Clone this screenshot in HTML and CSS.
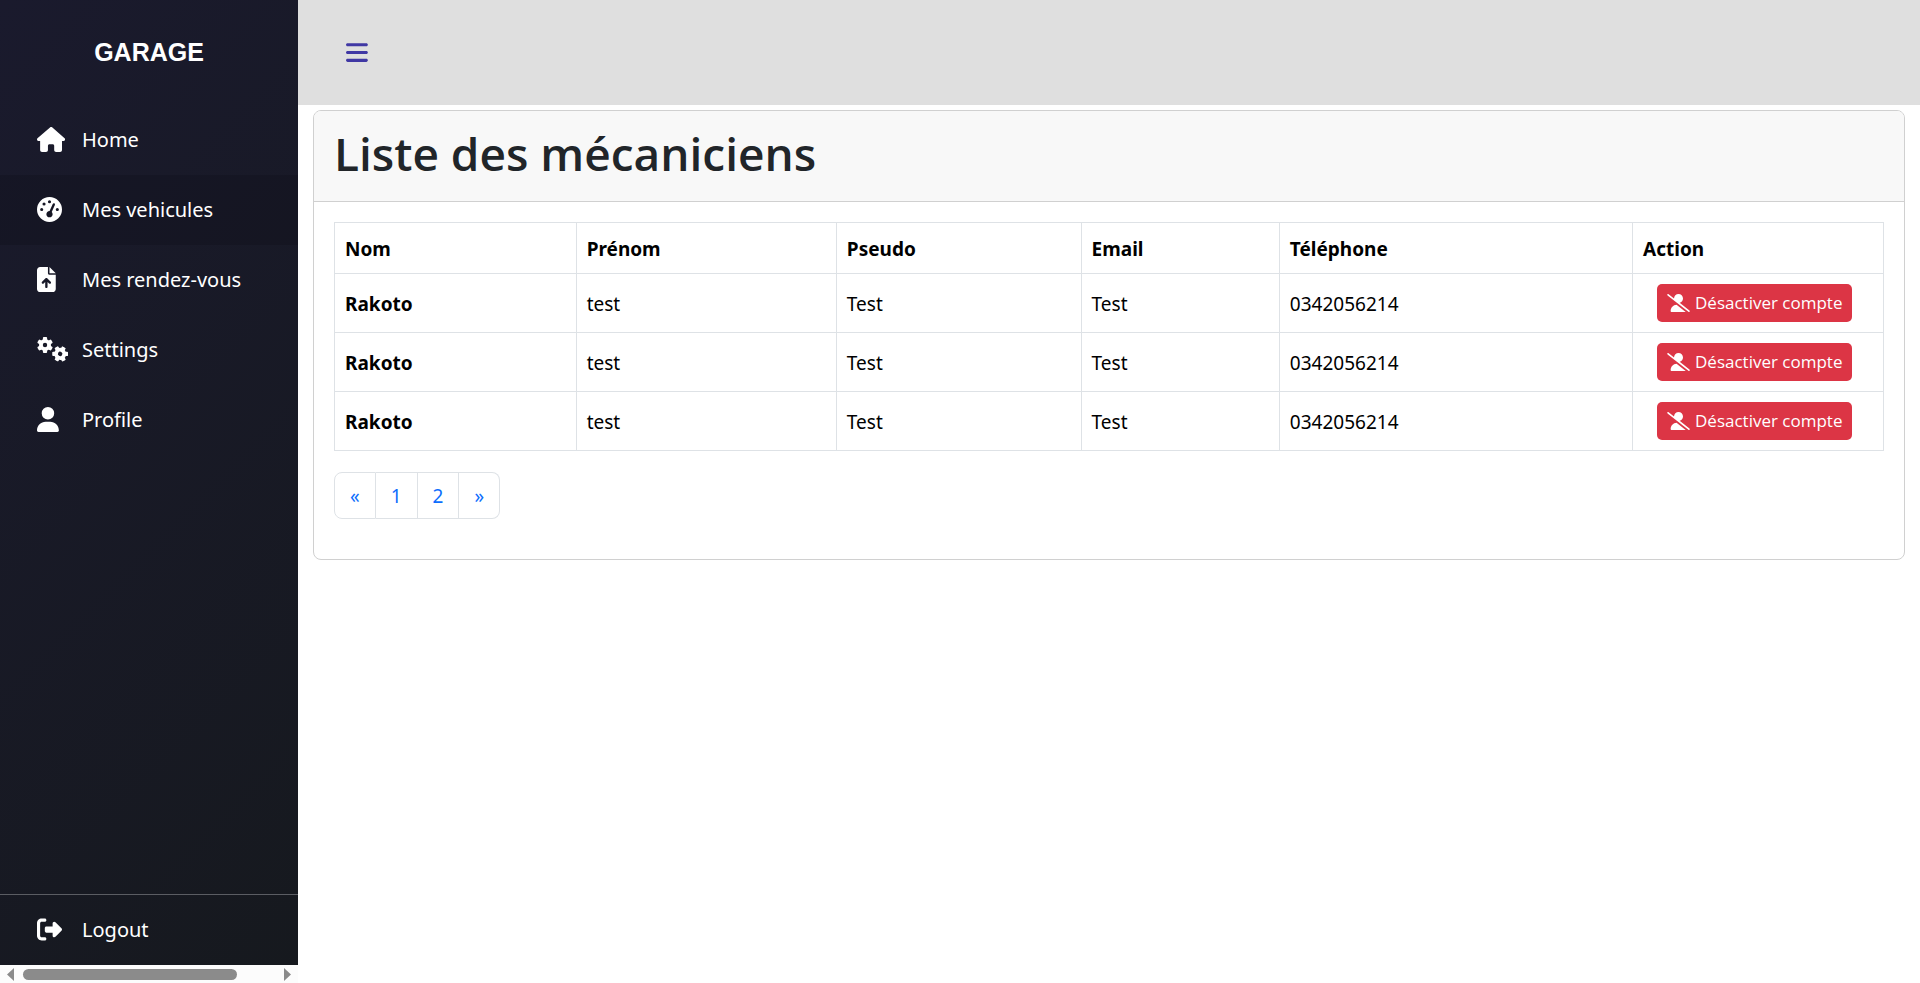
FILE: index.html
```html
<!DOCTYPE html>
<html lang="fr">
<head>
<meta charset="utf-8">
<title>Garage</title>
<link rel="stylesheet" href="styles.css">
</head>
<body>
<svg class="sprite" aria-hidden="true">
  <symbol id="slash" viewBox="0 0 640 512"><path d="M38.8 5.1C28.4-3.1 13.3-1.2 5.1 9.2S-1.2 34.7 9.2 42.9l592 464c10.4 8.2 25.5 6.3 33.7-4.1s6.3-25.5-4.1-33.7L353.3 251.6C407.9 237 448 187.2 448 128C448 57.3 390.7 0 320 0C250.2 0 193.5 55.8 192 125.2L38.8 5.1zM264.3 304.3C170.5 309.4 96 387.2 96 482.3c0 16.4 13.3 29.7 29.7 29.7H514.3c3.9 0 7.6-.7 11-2.1l-261-205.6z"/></symbol>
  <symbol id="gear" viewBox="-160 -160 320 320">
    <circle r="82" fill="none" stroke="currentColor" stroke-width="76"/>
    <g fill="currentColor">
      <rect id="tooth" x="-42" y="-158" width="84" height="64" rx="18"/>
      <use href="#tooth" transform="rotate(60)"/>
      <use href="#tooth" transform="rotate(120)"/>
      <use href="#tooth" transform="rotate(180)"/>
      <use href="#tooth" transform="rotate(240)"/>
      <use href="#tooth" transform="rotate(300)"/>
    </g>
  </symbol>
</svg>
<div class="layout">
  <aside class="sidebar">
    <div class="brand">GARAGE</div>
    <nav class="menu">
      <a class="item" href="#"><span class="icon"><svg viewBox="0 0 576 512"><path d="M575.8 255.5c0 18-15 32.1-32 32.1h-32l.7 160.2c0 2.7-.2 5.4-.5 8.1V472c0 22.1-17.9 40-40 40H456c-1.1 0-2.2 0-3.3-.1c-1.4 .1-2.8 .1-4.2 .1H416 392c-22.1 0-40-17.9-40-40V448 384c0-17.7-14.3-32-32-32H256c-17.7 0-32 14.3-32 32v64 24c0 22.1-17.9 40-40 40H160 128.1c-1.5 0-3-.1-4.5-.2c-1.2 .1-2.4 .2-3.6 .2H104c-22.1 0-40-17.9-40-40V360c0-.9 0-1.9 .1-2.8V287.6H32c-18 0-32-14-32-32.1c0-9 3-17 10-24L266.4 8c7-7 15-8 22-8s15 2 21 7L564.8 231.5c8 7 12 15 11 24z"/></svg></span><span class="label">Home</span></a>
      <a class="item active" href="#"><span class="icon"><svg viewBox="0 0 512 512"><path fill-rule="evenodd" d="M0 256a256 256 0 1 1 512 0A256 256 0 1 1 0 256zM288 96a32 32 0 1 0 -64 0 32 32 0 1 0 64 0zM256 416c35.3 0 64-28.7 64-64c0-17.4-6.9-33.1-18.1-44.6L366 161.7c5.3-12.1-.2-26.3-12.3-31.6s-26.3 .2-31.6 12.3L257.900 288c-.6 0-1.3 0-1.9 0c-35.3 0-64 28.7-64 64s28.7 64 64 64zM176 144a32 32 0 1 0 -64 0 32 32 0 1 0 64 0zM96 288a32 32 0 1 0 0-64 32 32 0 1 0 0 64zm352-32a32 32 0 1 0 -64 0 32 32 0 1 0 64 0z"/></svg></span><span class="label">Mes vehicules</span></a>
      <a class="item" href="#"><span class="icon"><svg viewBox="0 0 384 512"><path fill-rule="evenodd" d="M64 0C28.7 0 0 28.7 0 64V448c0 35.3 28.7 64 64 64H320c35.3 0 64-28.7 64-64V160H256c-17.7 0-32-14.3-32-32V0H64zM256 0V128H384L256 0zM216 408c0 13.3-10.7 24-24 24s-24-10.7-24-24V305.9l-31 31c-9.4 9.4-24.6 9.4-33.9 0s-9.4-24.6 0-33.9l72-72c9.4-9.4 24.6-9.4 33.9 0l72 72c9.4 9.4 9.4 24.6 0 33.9s-24.6 9.4-33.9 0l-31-31V408z"/></svg></span><span class="label">Mes rendez-vous</span></a>
      <a class="item" href="#"><span class="icon"><svg viewBox="0 0 640 512"><use href="#gear" x="0" y="0" width="328" height="328"/><use href="#gear" x="-164" y="-164" width="328" height="328" transform="translate(474 346) rotate(30)"/></svg></span><span class="label">Settings</span></a>
      <a class="item" href="#"><span class="icon"><svg viewBox="0 0 448 512"><path d="M224 256A128 128 0 1 0 224 0a128 128 0 1 0 0 256zm-45.7 48C79.8 304 0 383.8 0 482.3C0 498.7 13.3 512 29.7 512H418.3c16.4 0 29.7-13.3 29.7-29.7C448 383.8 368.2 304 269.7 304H178.3z"/></svg></span><span class="label">Profile</span></a>
    </nav>
    <div class="foot">
      <a class="item" href="#"><span class="icon"><svg viewBox="0 0 512 512"><path d="M377.9 105.9L500.7 228.7c7.2 7.2 11.3 17.1 11.3 27.3s-4.1 20.1-11.3 27.3L377.9 406.1c-6.4 6.4-15 9.9-24 9.9c-18.7 0-33.9-15.2-33.9-33.9l0-62.1-128 0c-17.7 0-32-14.3-32-32l0-64c0-17.7 14.3-32 32-32l128 0 0-62.1c0-18.7 15.2-33.9 33.9-33.9c9 0 17.6 3.6 24 9.9zM160 96L96 96c-17.7 0-32 14.3-32 32l0 256c0 17.7 14.3 32 32 32l64 0c17.7 0 32 14.3 32 32s-14.3 32-32 32l-64 0c-53 0-96-43-96-96L0 128C0 75 43 32 96 32l64 0c17.7 0 32 14.3 32 32s-14.3 32-32 32z"/></svg></span><span class="label">Logout</span></a>
    </div>
    <div class="scrollbar" aria-hidden="true">
      <svg class="arrow" viewBox="0 0 7 13"><path d="M7 0v13L0 6.500z"/></svg>
      <div class="track"><div class="thumb"></div></div>
      <svg class="arrow" viewBox="0 0 7 13"><path d="M0 0v13L7 6.500z"/></svg>
    </div>
  </aside>
  <div class="page">
    <header class="topbar">
      <button class="toggle" type="button" aria-label="Menu"><svg viewBox="0 0 448 512"><path d="M0 96C0 78.3 14.3 64 32 64H416c17.7 0 32 14.3 32 32s-14.3 32-32 32H32C14.3 128 0 113.7 0 96zM0 256c0-17.7 14.3-32 32-32H416c17.7 0 32 14.3 32 32s-14.3 32-32 32H32c-17.7 0-32-14.3-32-32zM448 416c0 17.7-14.3 32-32 32H32c-17.7 0-32-14.3-32-32s14.3-32 32-32H416c17.7 0 32 14.3 32 32z"/></svg></button>
    </header>
    <main class="card">
      <div class="card-header"><h1>Liste des mécaniciens</h1></div>
      <div class="card-body">
        <table class="table">
          <colgroup><col class="c-nom"><col class="c-prenom"><col class="c-pseudo"><col class="c-email"><col class="c-tel"><col></colgroup>
          <thead>
            <tr><th scope="col">Nom</th><th scope="col">Prénom</th><th scope="col">Pseudo</th><th scope="col">Email</th><th scope="col">Téléphone</th><th scope="col">Action</th></tr>
          </thead>
          <tbody>
            <tr><th scope="row">Rakoto</th><td>test</td><td>Test</td><td>Test</td><td>0342056214</td><td class="action"><button class="btn" type="button"><svg><use href="#slash"/></svg>Désactiver compte</button></td></tr>
            <tr><th scope="row">Rakoto</th><td>test</td><td>Test</td><td>Test</td><td>0342056214</td><td class="action"><button class="btn" type="button"><svg><use href="#slash"/></svg>Désactiver compte</button></td></tr>
            <tr><th scope="row">Rakoto</th><td>test</td><td>Test</td><td>Test</td><td>0342056214</td><td class="action"><button class="btn" type="button"><svg><use href="#slash"/></svg>Désactiver compte</button></td></tr>
          </tbody>
        </table>
        <nav class="pagination" aria-label="Pagination">
          <a href="#">«</a><a href="#">1</a><a href="#">2</a><a href="#">»</a>
        </nav>
      </div>
    </main>
  </div>
</div>
</body>
</html>
```

FILE: styles.css
```css
* { box-sizing: border-box; }

body {
  margin: 0;
  background: #fff;
  color: #212529;
  font-family: "Noto Sans", "Open Sans", sans-serif;
  font-size: 19px;
  line-height: 30px;
}

.sprite { position: absolute; width: 0; height: 0; }

.layout { display: flex; min-height: 100vh; }

.sidebar {
  flex: none;
  width: 298px;
  display: flex;
  flex-direction: column;
  background: linear-gradient(135deg, #1a1a2d, #16191e);
}

.brand {
  height: 105px;
  padding-bottom: 2px;
  display: flex;
  align-items: center;
  justify-content: center;
  color: #fff;
  font-family: "Liberation Sans", Arial, sans-serif;
  font-size: 25px;
  font-weight: 700;
}

.menu { flex: 1; }

.item {
  height: 70px;
  padding-left: 37px;
  display: flex;
  align-items: center;
  color: #fff;
  font-size: 20px;
  text-decoration: none;
}
.item.active { background: rgba(0, 0, 0, .12); }

.icon { width: 45px; padding-bottom: 2px; display: flex; }
.icon svg { height: 25px; fill: currentColor; }

.foot { border-top: 1px solid #5b5d63; }

.scrollbar {
  height: 18px;
  padding: 0 7px;
  display: flex;
  align-items: center;
  gap: 9px;
  background: #fcfcfc;
}
.arrow { width: 7px; height: 13px; fill: #8b8b8b; }
.track { flex: 1; }
.thumb { width: 85%; height: 11px; border-radius: 6px; background: #8b8b8b; }

.page { flex: 1; min-width: 0; }

.topbar {
  height: 105px;
  padding-left: 48px;
  display: flex;
  align-items: center;
  background: #dfdfdf;
}
.toggle { padding: 0; border: 0; background: none; display: flex; color: #4038a4; }
.toggle svg { height: 25px; fill: currentColor; }

.card {
  margin: 5px 15px 0;
  border: 1px solid #d0d0d0;
  border-radius: 8px;
  overflow: hidden;
}
.card-header {
  padding: 12px 20px 18px;
  border-bottom: 1px solid #d0d0d0;
  background: #f8f8f8;
}
h1 {
  margin: 0;
  font-family: "Open Sans", "Noto Sans", sans-serif;
  font-size: 46px;
  font-weight: 600;
  line-height: 60px;
}
.card-body { padding: 20px 20px 40px; }

.table {
  width: 100%;
  border-collapse: collapse;
  table-layout: fixed;
  color: #000;
}
.table th, .table td {
  padding: 11px 10px 9px;
  border: 1px solid #dee2e6;
  text-align: left;
  vertical-align: middle;
}
.table .action { padding: 10px 10px 10px 24px; }
.c-nom { width: 15.6%; }
.c-prenom { width: 16.8%; }
.c-pseudo { width: 15.8%; }
.c-email { width: 12.8%; }
.c-tel { width: 22.8%; }

.btn {
  display: flex;
  align-items: center;
  gap: 5px;
  padding: 5px 10px;
  border: 0;
  border-radius: 5px;
  background: #dc3545;
  color: #fff;
  font-family: "Open Sans", "Noto Sans", sans-serif;
  font-size: 17px;
  line-height: 28px;
  white-space: nowrap;
}
.btn svg { width: 23px; height: 18px; fill: currentColor; }

.pagination { display: flex; margin-top: 21px; }
.pagination a {
  padding: 8px 15px 7px;
  border: 1px solid #dee2e6;
  color: #0d6efd;
  text-align: center;
  text-decoration: none;
}
.pagination a + a { border-left: 0; }
.pagination a:first-child { border-radius: 8px 0 0 8px; }
.pagination a:last-child { border-radius: 0 8px 8px 0; }
```
